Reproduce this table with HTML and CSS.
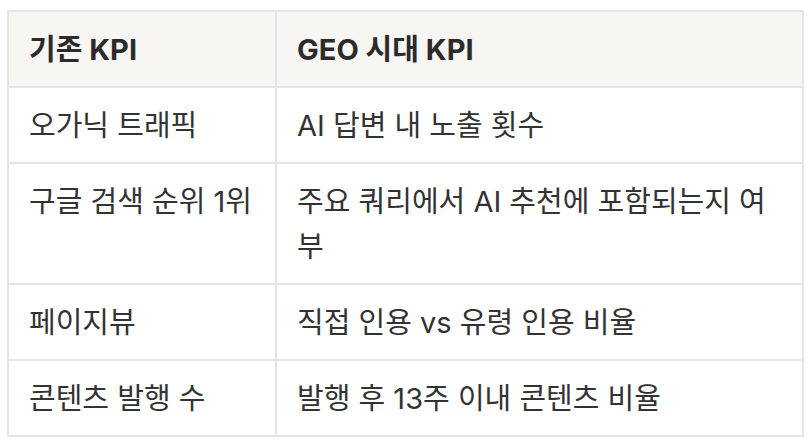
FILE: index.html
```html
<!DOCTYPE html>
<html lang="ko">
<head>
<meta charset="utf-8">
<link rel="stylesheet" href="styles.css">
</head>
<body>
<table class="kpi">
  <colgroup>
    <col class="c1">
    <col class="c2">
  </colgroup>
  <thead>
    <tr><th>기존 KPI</th><th>GEO 시대 KPI</th></tr>
  </thead>
  <tbody>
    <tr><td>오가닉 트래픽</td><td>AI 답변 내 노출 횟수</td></tr>
    <tr><td>구글 검색 순위 1위</td><td>주요 쿼리에서 AI 추천에 포함되는지 여부</td></tr>
    <tr><td>페이지뷰</td><td>직접 인용 vs 유령 인용 비율</td></tr>
    <tr><td>콘텐츠 발행 수</td><td>발행 후 13주 이내 콘텐츠 비율</td></tr>
  </tbody>
</table>
</body>
</html>
```

FILE: styles.css
```css
html, body {
  margin: 0;
  background: #ffffff;
}
body {
  padding: 10px 0 0 7px;
  font-family: Inter, "Noto Sans CJK KR", sans-serif;
  color: #2f2f2f;
}
.kpi {
  border-collapse: collapse;
  width: 797px;
  table-layout: fixed;
  font-size: 29px;
}
.c1 { width: 268px; }
.kpi th, .kpi td {
  border: 2px solid #e6e5e3;
  padding: 15px 18px 14px 20px;
  line-height: 45px;
  text-align: left;
  vertical-align: top;
}
.kpi th {
  background: #f7f6f3;
  font-weight: 700;
  color: #2b2b2b;
}
.kpi td {
  font-weight: 400;
  color: #333333;
}
```
